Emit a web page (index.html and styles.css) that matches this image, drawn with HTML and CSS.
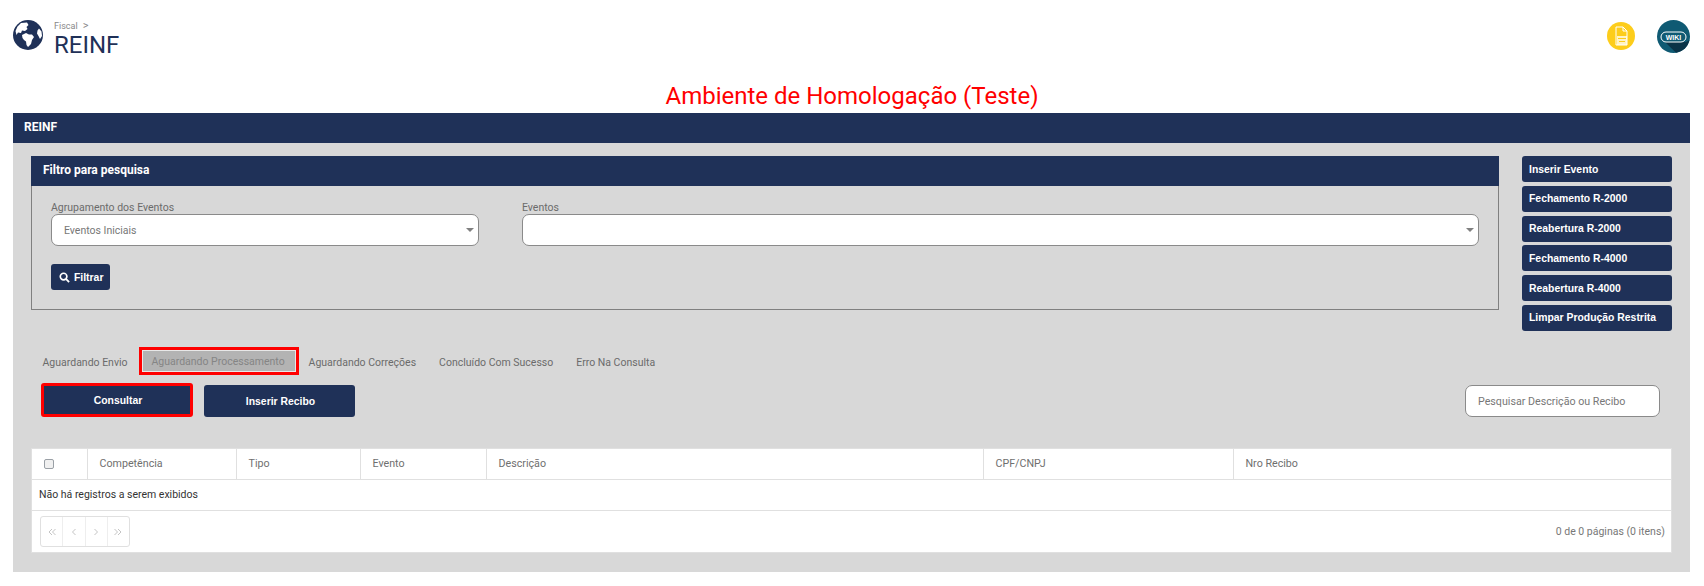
FILE: index.html
```html
<!DOCTYPE html>
<html lang="pt-BR">
<head>
    <meta charset="UTF-8">
    <title>REINF</title>
    <link rel="stylesheet" href="styles.css">
</head>
<body>
    <header class="top">
        <svg class="globe" viewBox="0 0 30 30" width="30" height="30">
            <circle cx="15" cy="15" r="15" fill="#1f3158"/>
            <path fill="#fff" d="M8 3 L14 2.5 L15.5 5 L13.5 7 L14.5 9 L12 11 L9 10.5 L8 13 L5 12.5 L3.5 15 L2.5 11 L4.5 6.5 Z"/>
            <path fill="#fff" d="M9 15 L13 13 L16 14.5 L19 14.5 L21 17 L19 20 L18 24 L15 27 L13.5 25 L13 21.5 L11 20 L9.5 18 Z"/>
            <path fill="#fff" d="M26 8.5 L28.5 11.5 L29 16 L27 19 L25.5 16 L24 13.5 L24.5 10.5 Z"/>
        </svg>
        <div class="crumbs">
            <div class="crumb">Fiscal <span class="crumb-sep">&gt;</span></div>
            <div class="page-title">REINF</div>
        </div>
        <div class="top-icons">
            <svg class="icon-doc" viewBox="0 0 28 28" width="28" height="28">
                <circle cx="14" cy="14" r="14" fill="#fdcd1b"/>
                <path fill="none" stroke="#fff" stroke-width="1" d="M9 5 H16 L20 9 V23 H9 Z M16 5 V9 H20"/>
                <rect x="10" y="14" width="10" height="9" fill="#fff" opacity="0.75"/>
                <path fill="#fdcd1b" d="M11 16 H19 V17 H11 Z M12 19 H18 V20 H12 Z"/>
            </svg>
            <svg class="icon-wiki" viewBox="0 0 33 33" width="33" height="33">
                <circle cx="16.5" cy="16.5" r="16.5" fill="#0f5a73"/>
                <path fill="#0a3347" d="M8 22 H29 L32.5 20 A16.5 16.5 0 0 1 19 32.8 Z"/>
                <rect x="4" y="12" width="25" height="10" rx="5" fill="none" stroke="#fff" stroke-width="1"/>
                <text class="wiki-text" x="16.5" y="19.7" text-anchor="middle">WIKI</text>
            </svg>
        </div>
    </header>

    <div class="ambiente">Ambiente de Homologação (Teste)</div>

    <section class="panel">
        <div class="panel-head">REINF</div>
        <div class="panel-body">
            <div class="filter-row">
                <div class="filter">
                    <div class="filter-head">Filtro para pesquisa</div>
                    <div class="filter-body">
                        <div class="fields">
                            <div class="field field-a">
                                <label>Agrupamento dos Eventos</label>
                                <div class="select">Eventos Iniciais<span class="caret"></span></div>
                            </div>
                            <div class="field field-b">
                                <label>Eventos</label>
                                <div class="select"><span class="caret"></span></div>
                            </div>
                        </div>
                        <button class="btn btn-filter">
                            <svg viewBox="0 0 12 12" width="11" height="11"><circle cx="5" cy="5" r="3.6" fill="none" stroke="#fff" stroke-width="1.8"/><path d="M7.6 7.6 L11 11" stroke="#fff" stroke-width="2"/></svg>
                            Filtrar
                        </button>
                    </div>
                </div>
                <div class="side">
                    <button class="btn side-btn">Inserir Evento</button>
                    <button class="btn side-btn">Fechamento R-2000</button>
                    <button class="btn side-btn">Reabertura R-2000</button>
                    <button class="btn side-btn">Fechamento R-4000</button>
                    <button class="btn side-btn">Reabertura R-4000</button>
                    <button class="btn side-btn">Limpar Produção Restrita</button>
                </div>
            </div>

            <div class="tabs">
                <span class="tab">Aguardando Envio</span>
                <span class="tab tab-active">Aguardando Processamento</span>
                <span class="tab">Aguardando Correções</span>
                <span class="tab">Concluído Com Sucesso</span>
                <span class="tab">Erro Na Consulta</span>
            </div>

            <div class="actions">
                <button class="btn action-btn action-marked">Consultar</button>
                <button class="btn action-btn">Inserir Recibo</button>
                <input class="search" type="text" placeholder="Pesquisar Descrição ou Recibo">
            </div>

            <div class="grid">
                <table>
                    <thead>
                        <tr>
                            <th class="col-check"><span class="checkbox"></span></th>
                            <th class="col-comp">Competência</th>
                            <th class="col-tipo">Tipo</th>
                            <th class="col-evento">Evento</th>
                            <th class="col-desc">Descrição</th>
                            <th class="col-cpf">CPF/CNPJ</th>
                            <th>Nro Recibo</th>
                        </tr>
                    </thead>
                    <tbody>
                        <tr><td colspan="7">Não há registros a serem exibidos</td></tr>
                    </tbody>
                </table>
                <div class="pager">
                    <div class="pager-btns">
                        <span><svg viewBox="0 0 10 10" width="10" height="10"><path d="M5 2 L2 5 L5 8 M8.5 2 L5.5 5 L8.5 8"/></svg></span>
                        <span><svg viewBox="0 0 10 10" width="10" height="10"><path d="M6.5 2 L3.5 5 L6.5 8"/></svg></span>
                        <span><svg viewBox="0 0 10 10" width="10" height="10"><path d="M3.5 2 L6.5 5 L3.5 8"/></svg></span>
                        <span><svg viewBox="0 0 10 10" width="10" height="10"><path d="M1.5 2 L4.5 5 L1.5 8 M5 2 L8 5 L5 8"/></svg></span>
                    </div>
                    <div class="pager-info">0 de 0 páginas (0 itens)</div>
                </div>
            </div>
        </div>
    </section>
</body>
</html>
```

FILE: styles.css
```css
* {
    box-sizing: border-box;
}

body {
    margin: 0;
    background: #fff;
    font-family: Roboto, "Liberation Sans", sans-serif;
    font-size: 12px;
    color: #6b6b6b;
}

.top {
    display: flex;
    height: 82px;
    padding: 20px 14px 0 13px;
}

.crumbs {
    margin-left: 11px;
}

.crumb {
    font-size: 9px;
    line-height: 11px;
    color: #888;
}

.crumb-sep {
    margin-left: 3px;
    font-size: 11px;
}

.page-title {
    margin-top: 0;
    font-size: 24px;
    line-height: 26px;
    color: #1f3158;
}

.top-icons {
    display: flex;
    gap: 22px;
    margin-left: auto;
}

.icon-doc {
    margin-top: 2px;
}

.wiki-text {
    font-family: "Liberation Sans", sans-serif;
    font-size: 7px;
    font-weight: bold;
    fill: #fff;
}

.ambiente {
    height: 31px;
    font-size: 24px;
    line-height: 28px;
    text-align: center;
    color: #ff0000;
}

.panel {
    width: 1677px;
    margin-left: 13px;
    background: #d8d8d8;
}

.panel-head {
    height: 30px;
    padding-left: 11px;
    background: #1f3158;
    color: #fff;
    font-size: 12px;
    font-weight: 700;
    line-height: 28px;
}

.panel-body {
    padding: 13px 18px 19px 18px;
}

.filter-row {
    display: flex;
    justify-content: space-between;
}

.filter {
    width: 1468px;
    height: 154px;
}

.filter-head {
    height: 30px;
    padding-left: 12px;
    background: #1f3158;
    color: #fff;
    font-size: 12px;
    font-weight: 700;
    line-height: 28px;
}

.filter-body {
    height: 124px;
    padding: 15px 19px 0 19px;
    border: 1px solid #808080;
    border-top: none;
}

.fields {
    display: flex;
    gap: 43px;
}

.field-a {
    width: 428px;
}

.field-b {
    flex: 1;
}

.field label {
    display: block;
    height: 13px;
    font-size: 10.5px;
    line-height: 13px;
    color: #6b6b6b;
}

.select {
    position: relative;
    height: 32px;
    padding-left: 12px;
    background: #fff;
    border: 1px solid #8a8a8a;
    border-radius: 7px;
    font-size: 10.5px;
    line-height: 31px;
    color: #777;
}

.caret {
    position: absolute;
    top: 13px;
    right: 1px;
    width: 0;
    height: 0;
    margin-right: 3px;
    border-left: 4px solid transparent;
    border-right: 4px solid transparent;
    border-top: 4px solid #808080;
}

.btn {
    border: none;
    border-radius: 3px;
    background: #1f3158;
    color: #fff;
    font-family: "Liberation Sans", sans-serif;
    font-size: 10.4px;
    font-weight: bold;
    cursor: pointer;
}

.btn-filter {
    display: flex;
    align-items: center;
    gap: 4px;
    width: 59px;
    height: 26px;
    margin-top: 18px;
    padding: 0 0 0 8px;
}

.side {
    display: flex;
    flex-direction: column;
    gap: 3.8px;
    width: 150px;
}

.side-btn {
    height: 26px;
    padding: 0 0 0 7px;
    text-align: left;
}

.tabs {
    display: flex;
    align-items: center;
    height: 28px;
    margin-top: 16px;
}

.tab {
    padding: 4px 11.5px 0;
    font-size: 10.5px;
    line-height: 22px;
    color: #6b6b6b;
}

.tab-active {
    width: 160px;
    height: 28px;
    margin-right: -2px;
    padding: 1px 2px 0 0;
    background: #b3b3b3;
    border: 3px solid #f00;
    outline: 1px solid #e8e8e8;
    outline-offset: -4px;
    text-align: center;
    color: #858585;
    white-space: nowrap;
}

.actions {
    display: flex;
    align-items: flex-end;
    height: 34px;
    margin-top: 8px;
    margin-left: 10px;
}

.action-btn {
    width: 151px;
    height: 32px;
    margin-right: 11px;
    padding: 2px 0 0 2px;
}

.action-marked {
    width: 152px;
    height: 34px;
    border: 3px solid #f00;
}

.search {
    width: 195px;
    height: 32px;
    margin-left: auto;
    margin-right: 12px;
    padding: 1px 12px 0;
    border: 1px solid #8a8a8a;
    border-radius: 7px;
    font-family: Roboto, "Liberation Sans", sans-serif;
    font-size: 10.7px;
}

.search::placeholder {
    color: #777;
    opacity: 1;
}

.grid {
    width: 1641px;
    margin-top: 31px;
    background: #fff;
    border: 1px solid #e0e0e0;
}

table {
    width: 100%;
    border-collapse: collapse;
    table-layout: fixed;
}

th {
    height: 31px;
    padding: 0 12px 2px 12px;
    border-right: 1px solid #e0e0e0;
    border-bottom: 1px solid #e0e0e0;
    font-size: 10.7px;
    font-weight: 400;
    text-align: left;
    color: #6f6f6f;
}

th:last-child {
    border-right: none;
}

td {
    height: 31px;
    padding: 0 7px 2px;
    border-bottom: 1px solid #e0e0e0;
    font-size: 10.5px;
    color: #333;
}

.col-check { width: 55px; padding: 0 0 0 12px; }
.col-comp { width: 149px; }
.col-tipo { width: 124px; }
.col-evento { width: 126px; }
.col-desc { width: 497px; }
.col-cpf { width: 250px; }

.checkbox {
    display: block;
    width: 10px;
    height: 10px;
    background: #f0f0f0;
    border: 1px solid #9aa0a6;
    border-radius: 2px;
}

.pager {
    display: flex;
    align-items: center;
    justify-content: space-between;
    height: 41px;
    padding: 0 6px 0 8px;
}

.pager-btns {
    display: flex;
    width: 90px;
    height: 31px;
    border: 1px solid #e0e0e0;
    border-radius: 3px;
}

.pager-btns span {
    display: flex;
    flex: 1;
    align-items: center;
    justify-content: center;
    border-right: 1px solid #eee;
}

.pager-btns span:last-child {
    border-right: none;
}

.pager-btns path {
    fill: none;
    stroke: #c4c4c4;
    stroke-width: 1;
}

.pager-info {
    font-size: 10.5px;
    color: #777;
}
```
